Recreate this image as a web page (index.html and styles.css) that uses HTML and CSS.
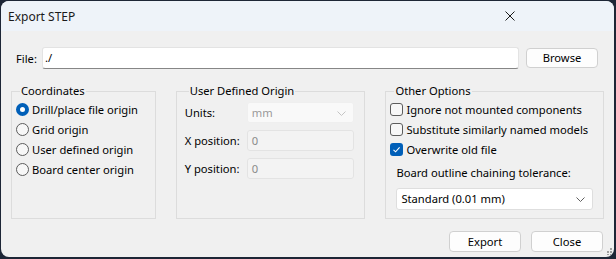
FILE: index.html
```html
<!DOCTYPE HTML>
<html>

<head>
    <meta charset="utf-8">
    <link rel="stylesheet" href="styles.css">
</head>

<body>
    <div class="window">
        <div class="titlebar">
            <span class="title">Export STEP</span>
            <svg class="close-icon" width="10" height="10" viewBox="0 0 10 10">
                <path d="M0.5 0.5 L9.5 9.5 M9.5 0.5 L0.5 9.5" />
            </svg>
        </div>

        <div class="content">
            <div class="file-row">
                <span class="file-label">File:</span>
                <div class="textbox">./</div>
                <button class="btn browse">Browse</button>
            </div>

            <div class="groups">
                <fieldset class="group coords">
                    <legend>Coordinates</legend>
                    <div class="option"><span class="radio checked"></span>Drill/place file origin</div>
                    <div class="option"><span class="radio"></span>Grid origin</div>
                    <div class="option"><span class="radio"></span>User defined origin</div>
                    <div class="option"><span class="radio"></span>Board center origin</div>
                </fieldset>

                <fieldset class="group user-origin">
                    <legend>User Defined Origin</legend>
                    <div class="field">
                        <span class="field-label">Units:</span>
                        <div class="combo disabled">mm
                            <svg class="chevron" width="9" height="5" viewBox="0 0 9 5">
                                <path d="M0.5 0.5 L4.5 4.5 L8.5 0.5" />
                            </svg>
                        </div>
                    </div>
                    <div class="field">
                        <span class="field-label">X position:</span>
                        <div class="input disabled">0</div>
                    </div>
                    <div class="field">
                        <span class="field-label">Y position:</span>
                        <div class="input disabled">0</div>
                    </div>
                </fieldset>

                <fieldset class="group other">
                    <legend>Other Options</legend>
                    <div class="option"><span class="checkbox"></span>Ignore not mounted components</div>
                    <div class="option"><span class="checkbox"></span>Substitute similarly named models</div>
                    <div class="option"><span class="checkbox checked">
                            <svg width="13" height="13" viewBox="0 0 13 13">
                                <path d="M3.5 6.8 L5.6 8.8 L9.6 4.4" />
                            </svg>
                        </span>Overwrite old file</div>
                    <div class="tolerance-label">Board outline chaining tolerance:</div>
                    <div class="combo">Standard (0.01 mm)
                        <svg class="chevron" width="9" height="5" viewBox="0 0 9 5">
                            <path d="M0.5 0.5 L4.5 4.5 L8.5 0.5" />
                        </svg>
                    </div>
                </fieldset>
            </div>

            <div class="actions">
                <button class="btn">Export</button>
                <button class="btn">Close</button>
            </div>
        </div>

        <svg class="grip" width="7" height="7" viewBox="0 0 7 7">
            <rect x="5" y="0" width="2" height="2" />
            <rect x="2" y="3" width="2" height="2" />
            <rect x="5" y="3" width="2" height="2" />
            <rect x="5" y="6" width="2" height="1" />
            <rect x="2" y="6" width="2" height="1" />
        </svg>
    </div>
</body>

</html>
```

FILE: styles.css
```css
* {
    box-sizing: border-box;
}

body {
    margin: 0;
    background-color: #1d2636;
    font-family: "Noto Sans", sans-serif;
    font-size: 11.2px;
    color: #000;
}

.window {
    position: relative;
    display: flex;
    flex-direction: column;
    width: 613px;
    height: 256px;
    margin: 1px 0 0 1px;
    background-color: #f0f0f0;
    border-radius: 8px;
    overflow: hidden;
}

.titlebar {
    display: flex;
    align-items: center;
    justify-content: space-between;
    height: 30px;
    padding: 0 99px 0 7px;
    background-color: #eef3f9;
    color: #1a1a1a;
}

.title {
    font-size: 12px;
}

.close-icon path {
    fill: none;
    stroke: #1a1a1a;
    stroke-width: 1;
}

.content {
    display: flex;
    flex-direction: column;
    flex: 1;
    padding: 16px 10px 0 10px;
}

/* file row */

.file-row {
    display: flex;
    align-items: center;
    height: 22px;
    margin: 0 6px 0 5px;
}

.file-label {
    margin-right: 5px;
}

.textbox {
    flex: 1;
    height: 22px;
    padding: 0 2px;
    line-height: 20px;
    background-color: #fff;
    border: 1px solid #e3e3e3;
    border-bottom-color: #868686;
    border-radius: 3px;
}

.btn {
    width: 72px;
    height: 21px;
    padding: 0;
    font: inherit;
    color: #000;
    background-color: #fdfdfd;
    border: 1px solid #d0d0d0;
    border-radius: 4px;
}

.browse {
    height: 20px;
    margin-left: 7px;
    margin-bottom: 1px;
}

/* group boxes */

.groups {
    display: flex;
    gap: 20px;
    margin-top: 14px;
}

.group {
    height: 136px;
    margin: 0;
    padding: 0 4px;
    border: 1px solid #dcdcdc;
    border-radius: 0;
    white-space: nowrap;
}

.group legend {
    padding: 0 1px;
    margin-left: 4px;
    line-height: 16px;
}

.coords {
    width: 145px;
}

.user-origin {
    width: 190px;
    padding: 3px 10px 0 8px;
}

.other {
    width: 219px;
}

.option {
    display: flex;
    align-items: center;
    height: 20px;
}

.radio {
    flex: none;
    width: 13px;
    height: 13px;
    margin-right: 3px;
    border: 1px solid #5c5c5c;
    border-radius: 50%;
    background-color: #f7f7f7;
}

.radio.checked {
    border: 4px solid #005fb8;
    background-color: #fff;
}

.checkbox {
    display: flex;
    flex: none;
    width: 13px;
    height: 13px;
    margin-right: 3px;
    border: 1px solid #5c5c5c;
    border-radius: 3px;
    background-color: #f7f7f7;
}

.checkbox.checked {
    border: none;
    background-color: #005fb8;
}

.checkbox path {
    fill: none;
    stroke: #fff;
    stroke-width: 1.1;
}

/* user origin fields */

.field {
    display: flex;
    align-items: center;
    height: 21px;
    margin-bottom: 7px;
}

.field-label {
    width: 62px;
}

.input,
.combo {
    position: relative;
    flex: 1;
    height: 21px;
    padding: 0 4px;
    line-height: 19px;
    border: 1px solid #e0e0e0;
    border-radius: 3px;
    background-color: #fff;
}

.input.disabled {
    background-color: #f3f3f3;
    border-color: #e3e3e3;
    color: #8a8a8a;
}

.combo.disabled {
    background-color: #f9f9f9;
    border-color: #efefef;
    color: #9a9a9a;
}

.chevron {
    position: absolute;
    right: 7px;
    top: 8px;
}

.chevron path {
    fill: none;
    stroke: #5f5f5f;
    stroke-width: 1;
}

.disabled .chevron path {
    stroke: #c4c4c4;
}

/* other options */

.tolerance-label {
    height: 16px;
    margin: 6px 0 7px 6px;
    line-height: 16px;
}

.other .combo {
    flex: none;
    height: 22px;
    margin: 0 6px;
    line-height: 20px;
    border-color: #dedede;
}

/* bottom buttons */

.actions {
    display: flex;
    justify-content: flex-end;
    gap: 10px;
    margin-top: 12px;
    margin-right: 1px;
}

.grip {
    position: absolute;
    right: 2px;
    bottom: 2px;
}

.grip rect {
    fill: #a0a0a0;
}
```
